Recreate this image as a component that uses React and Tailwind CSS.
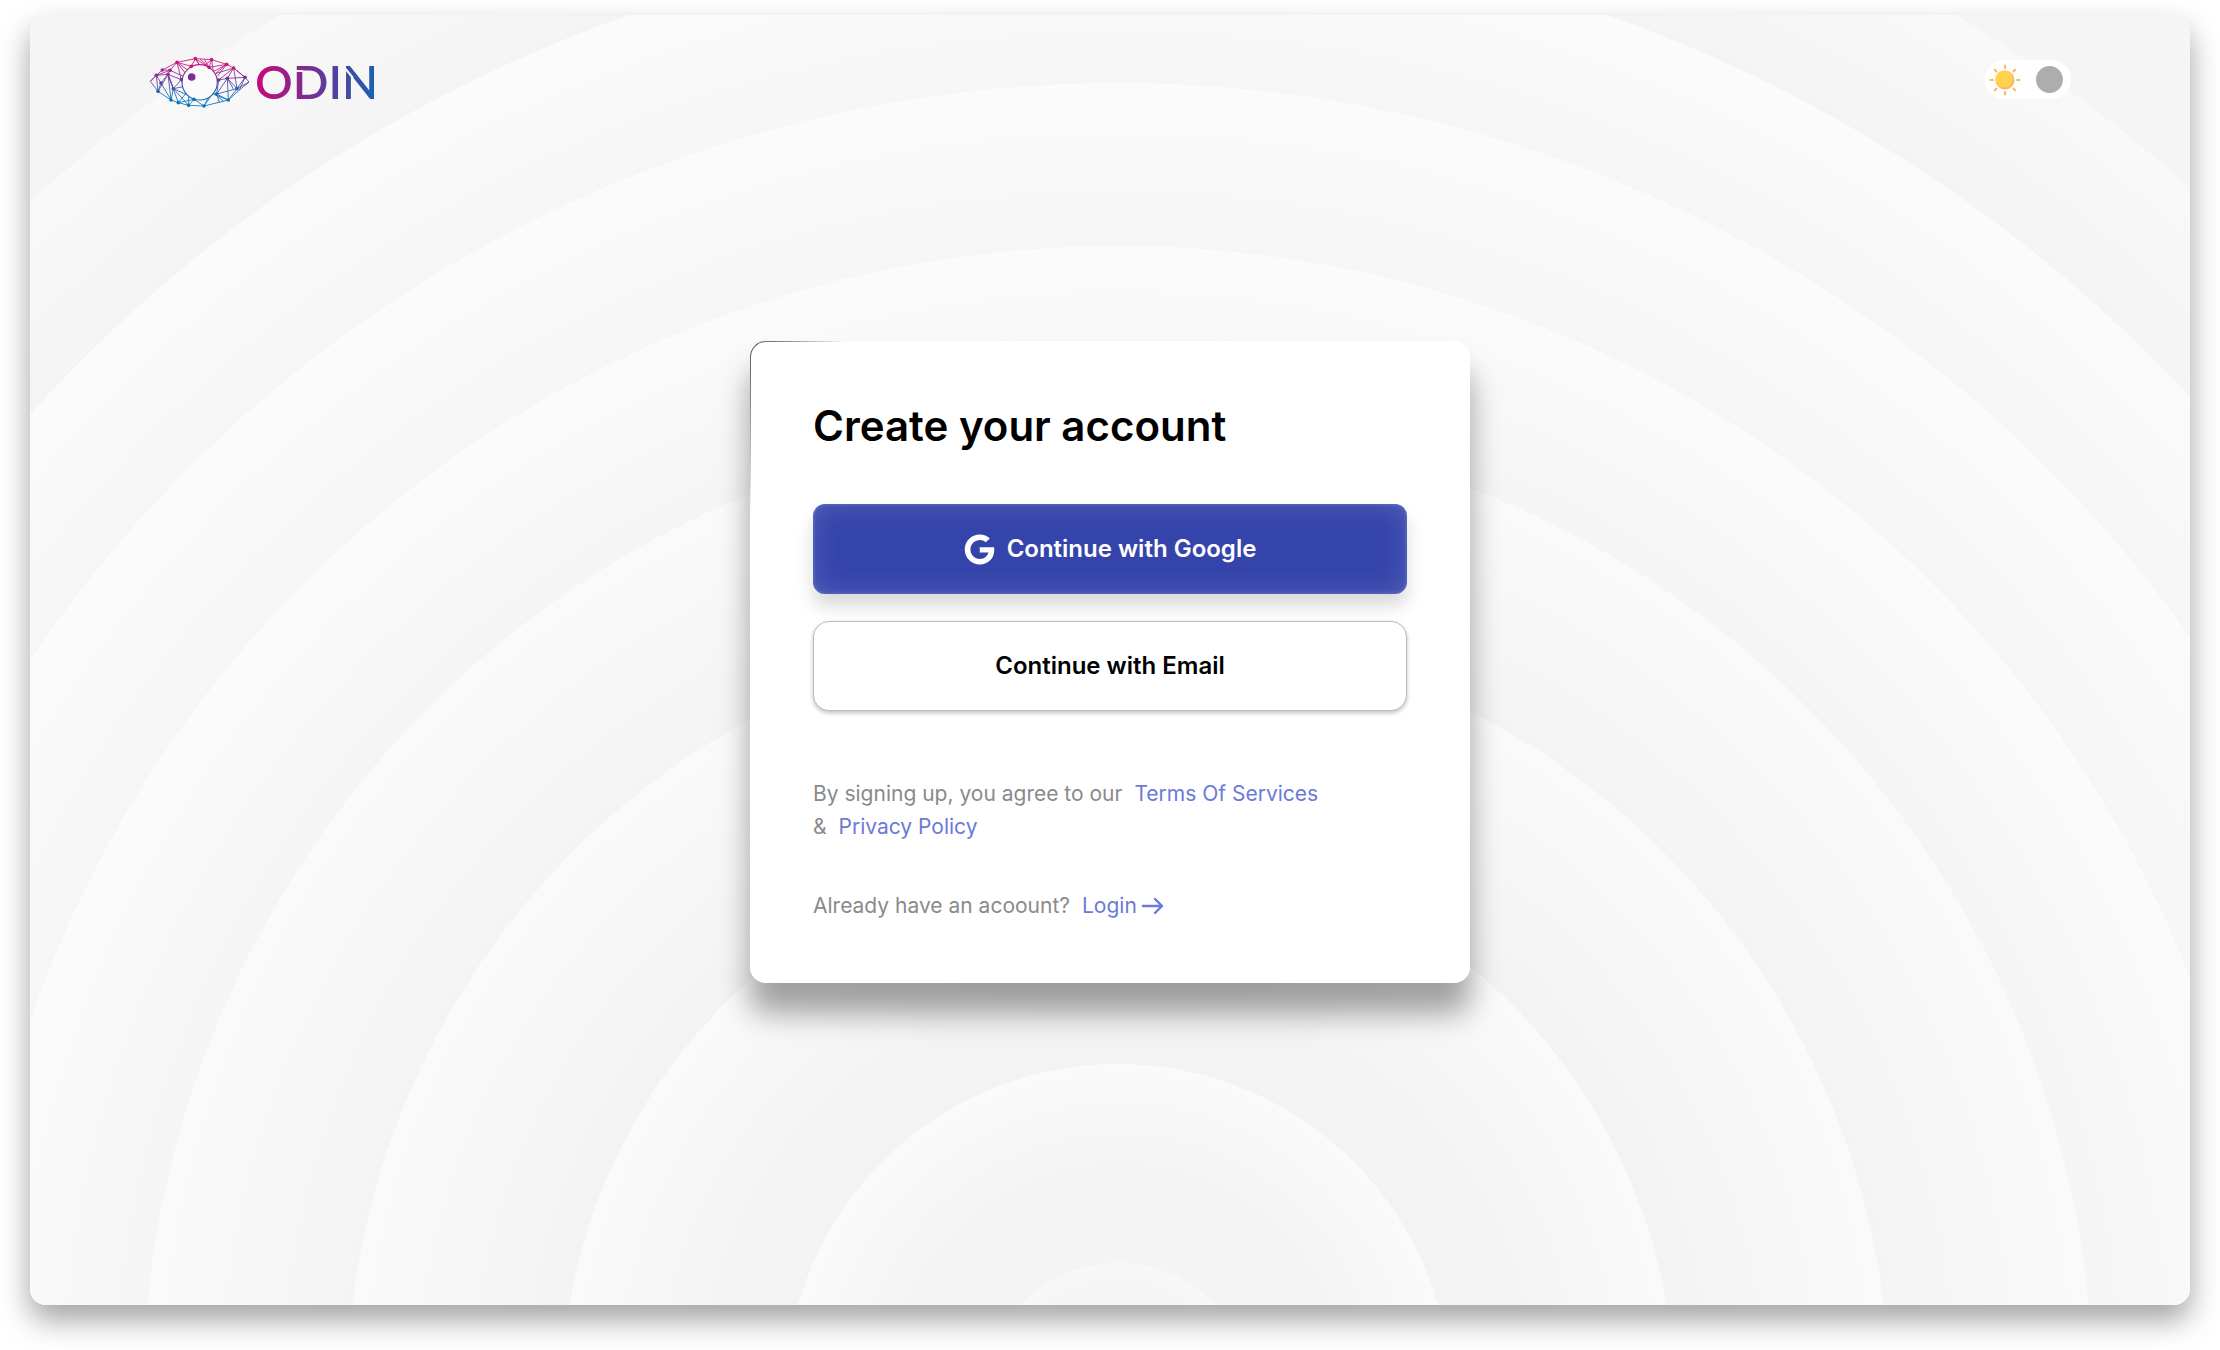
import React, { useState } from 'react';
import { FaGoogle } from 'react-icons/fa';

const nodes = [
  [49, 91], [67, 75], [111, 52], [166, 41], [215, 44], [260, 58], [281, 69], [315, 97],
  [54, 139], [93, 165], [115, 173], [146, 181], [192, 183], [265, 165], [291, 131],
  [63, 114], [84, 88], [90, 76], [100, 131], [124, 104], [154, 64], [207, 67],
  [236, 105], [262, 100], [230, 147], [162, 163],
];

const EyeMark = () => (
  <svg viewBox="27 33 306 156" className="w-[102px] h-[52px]" fill="none" aria-hidden="true">
    <defs>
      <linearGradient id="eye" x1="0" y1="40" x2="0" y2="184" gradientUnits="userSpaceOnUse">
        <stop offset="0" stopColor="#d1107f" />
        <stop offset="0.2" stopColor="#b81c86" />
        <stop offset="0.42" stopColor="#6f3597" />
        <stop offset="0.62" stopColor="#3a55a8" />
        <stop offset="0.8" stopColor="#0f6fb8" />
        <stop offset="1" stopColor="#0b76bd" />
      </linearGradient>
    </defs>
    <g stroke="url(#eye)" strokeWidth="2.6" strokeLinejoin="round">
      <path d="M31 109 49 91 67 75 111 52 166 41 215 44 260 58 281 69 315 97 327 111 291 141 265 165 192 183 146 181 115 173 93 165 54 139Z" />
      <path d="M31 109 49 91 54 139 84 88 49 91 90 76 67 75M49 91 63 114 54 139M63 114 84 88 93 165 63 114M84 88 100 131 84 88 90 76 111 52 124 104 84 88M84 88 115 173M90 76 130 94" />
      <path d="M100 131 124 104M100 131 135 124M100 131 93 165M100 131 146 181M100 131 142 150M142 140 115 173 162 163 146 181M162 163 192 183 206 155M146 150 146 181M111 52 154 64 166 41M111 52 150 80M111 52 140 90" />
      <path d="M166 41 180 62 166 41 207 67 180 42M193 43 207 67 215 44 220 80 260 58 207 67M215 44 190 64M260 58 226 86 281 69 236 105M260 58 232 94M281 69 262 100 315 97 281 69 291 131" />
      <path d="M236 105 262 100 230 147 236 105M262 100 291 131 315 97M262 100 280 132M291 131 327 111M262 100 265 165 291 131 230 147 265 165 215 145M230 147 238 172M215 140 250 168M192 183 222 140M315 97 298 135" />
    </g>
    <circle cx="179" cy="112" r="53" fill="#fbfbfb" stroke="url(#eye)" strokeWidth="3.4" />
    {nodes.map(([x, y]) => (
      <circle key={`${x}-${y}`} cx={x} cy={y} r="5.4" fill="url(#eye)" />
    ))}
    <circle cx="155" cy="96" r="11.5" fill="#7b2f93" />
  </svg>
);

const Logo = () => (
  <a href="#" aria-label="Odin" className="flex items-center">
    <EyeMark />
    <svg viewBox="-5 -10 134 72" className="w-[134px] h-[72px]">
      <defs>
        <linearGradient id="word" x1="0" y1="0" x2="120" y2="0" gradientUnits="userSpaceOnUse">
          <stop offset="0" stopColor="#c9087c" />
          <stop offset="0.28" stopColor="#97208a" />
          <stop offset="0.6" stopColor="#5b3c9b" />
          <stop offset="1" stopColor="#1b62b0" />
        </linearGradient>
        <mask id="cuts" maskUnits="userSpaceOnUse" x="-5" y="-10" width="134" height="72">
          <rect x="-5" y="-10" width="134" height="72" fill="#fff" />
          <path d="M40 15h7M88 11l9 11" stroke="#000" strokeWidth="2" />
        </mask>
      </defs>
      <text x="-1" y="43" fill="url(#word)" mask="url(#cuts)" className="font-['Lato',sans-serif] text-[47px] font-semibold">
        ODIN
      </text>
    </svg>
  </a>
);

const Sun = () => (
  <svg viewBox="0 0 32 32" className="size-8" aria-hidden="true">
    <g stroke="#fdb75e" strokeWidth="2" strokeLinecap="round">
      {[0, 45, 90, 135, 180, 225, 270, 315].map((deg) => (
        <path key={deg} d="M16 1.5v2.5" transform={`rotate(${deg} 16 16)`} />
      ))}
    </g>
    <circle cx="16" cy="16" r="9.5" fill="#fdb75e" />
    <ellipse cx="15" cy="15" rx="8.6" ry="8.4" fill="#ffd34d" />
  </svg>
);

const ThemeSwitch = () => {
  const [dark, setDark] = useState(false);

  return (
    <button
      type="button"
      role="switch"
      aria-checked={dark}
      aria-label="Dark mode"
      onClick={() => setDark(!dark)}
      className="mt-[14px] flex items-center justify-between w-[86px] h-[39px] pl-1 pr-2 rounded-full bg-white"
    >
      <Sun />
      <span className="size-[27px] rounded-full bg-[#adadad]" />
    </button>
  );
};

const SignUpCard = () => (
  <section className="w-[720px] max-w-full px-[62px] pt-[59px] pb-[60px] rounded-2xl border border-transparent [background:linear-gradient(#fff,#fff)_padding-box,linear-gradient(119deg,#555_0px,#888_30px,#fff_85px)_border-box] shadow-[0_30px_30px_rgba(0,0,0,0.36)]">
    <h1 className="text-[42px] leading-[50px] font-semibold text-black">Create your account</h1>

    <div className="mt-[53px] flex flex-col gap-[27px]">
      <button
        type="button"
        className="h-[90px] flex items-center justify-center gap-3 rounded-xl bg-[#3544ab] text-white text-2xl font-semibold shadow-[0_12px_18px_rgba(0,0,0,0.15),inset_0_0_30px_rgba(255,255,255,0.15),inset_0_0_4px_rgba(130,160,230,0.5)]"
      >
        <FaGoogle className="size-[31px]" />
        Continue with Google
      </button>
      <button
        type="button"
        className="h-[90px] flex items-center justify-center rounded-2xl border border-[#bdbdbd] bg-white text-black text-2xl font-semibold shadow-[0_2px_4px_rgba(0,0,0,0.25)]"
      >
        Continue with Email
      </button>
    </div>

    <div className="mt-[66px] text-[21px] leading-[33px] text-[#8a8a8a]">
      <p>
        By signing up, you agree to our
        <a href="#" className="ml-3 text-[#6b79d8]">Terms Of Services</a>
        <br />
        &amp;
        <a href="#" className="ml-3 text-[#6b79d8]">Privacy Policy</a>
      </p>
      <p className="mt-[46px] flex items-center">
        Already have an acoount?
        <a href="#" className="ml-3 flex items-center gap-1 text-[#6b79d8]">
          Login
          <svg viewBox="0 0 24 24" className="size-6" fill="none" stroke="currentColor" strokeWidth="2.4" strokeLinecap="round" strokeLinejoin="round" aria-hidden="true">
            <path d="M2 12h19M14 5l7 7-7 7" />
          </svg>
        </a>
      </p>
    </div>
  </section>
);

const App = () => (
  <div className="min-h-screen flex bg-white px-[30px] pt-[15px] pb-[45px] font-['Inter',sans-serif]">
    <div className="flex-1 flex flex-col rounded-2xl shadow-[0_15px_30px_rgba(0,0,0,0.37)] bg-[radial-gradient(circle_at_calc(50%+8px)_calc(100%+92px),#f5f5f5_110px,#f8f8f8_134px,#f4f4f4_134px,#f4f4f4_230px,#fafafa_333px,#f3f3f3_333px,#f3f3f3_390px,#fafafa_556px,#f3f3f3_556px,#fafafa_771px,#f4f4f4_771px,#fafafa_975px,#f5f5f5_975px,#fbfbfb_1151px,#f6f6f6_1151px,#fbfbfb_1314px,#f6f6f6_1314px,#fbfbfb_1466px,#f4f4f4_1466px,#f9f9f9_1616px,#f5f5f5_1616px)]">
      <header className="flex items-start justify-between px-[119px] pt-[31px]">
        <Logo />
        <ThemeSwitch />
      </header>
      <main className="flex-1 flex items-center justify-center pb-[99px]">
        <SignUpCard />
      </main>
    </div>
  </div>
);

export default App;
